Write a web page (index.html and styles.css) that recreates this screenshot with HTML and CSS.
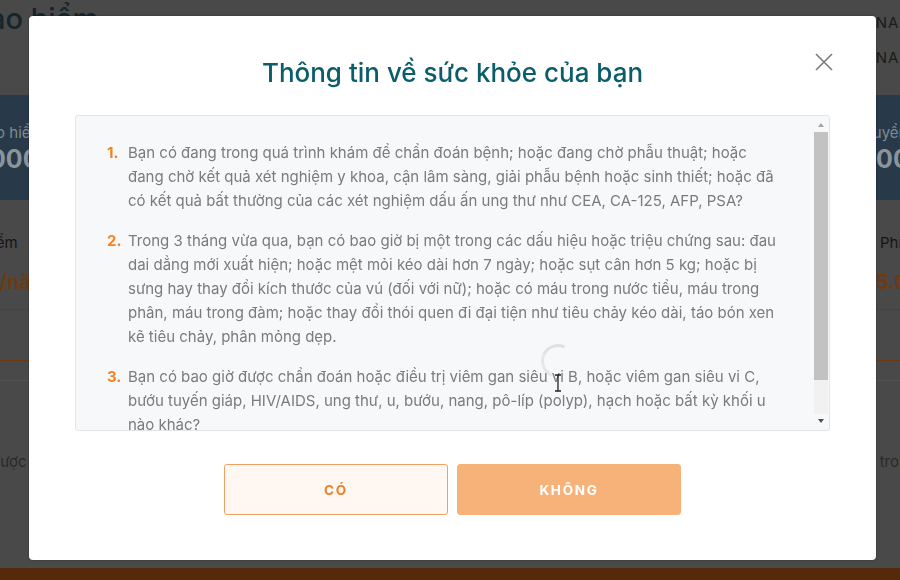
FILE: index.html
```html
<!DOCTYPE html>
<html lang="vi">
<head>
    <meta charset="UTF-8">
    <title>Thông tin sức khỏe</title>
    <link rel="stylesheet" href="styles.css">
</head>
<body>
<div class="page">
    <div class="page_head">
        <div class="brand">Bảo hiểm</div>
        <div class="user">
            <span>NAM</span>
            <span>NAM</span>
        </div>
    </div>
    <div class="band">
        <div class="band_col left">
            <span class="band_label">Phí bảo hiểm</span>
            <span class="band_num">000</span>
        </div>
        <div class="band_col right">
            <span class="band_label">Chuyển</span>
            <span class="band_num">5.000</span>
        </div>
    </div>
    <div class="sum_row">
        <div class="sum_col left">
            <span class="sum_label">Phí bảo hiểm</span>
            <span class="sum_val">đ/năm</span>
        </div>
        <div class="sum_col right">
            <span class="sum_label">Phí</span>
            <span class="sum_val">5.000</span>
        </div>
    </div>
    <div class="rule"></div>
    <div class="rule second"></div>
    <div class="note_row">
        <span class="note left">được lựa</span>
        <span class="note right">trong</span>
    </div>
    <div class="foot_bar"></div>
</div>

<div class="mask">
    <div class="modal">
        <h2 class="modal_title">Thông tin về sức khỏe của bạn</h2>
        <span class="close">
            <svg width="20" height="20" viewBox="0 0 20 20"><path d="M2 2 L18 18 M18 2 L2 18" stroke="#7a7a7a" stroke-width="1.6" fill="none"/></svg>
        </span>
        <div class="question_box">
            <ol class="question_list">
                <li>
                    <span class="num">1.</span>
                    <p>Bạn có đang trong quá trình khám để chẩn đoán bệnh; hoặc đang chờ phẫu thuật; hoặc<br>đang chờ kết quả xét nghiệm y khoa, cận lâm sàng, giải phẫu bệnh hoặc sinh thiết; hoặc đã<br>có kết quả bất thường của các xét nghiệm dấu ấn ung thư như CEA, CA-125, AFP, PSA?</p>
                </li>
                <li>
                    <span class="num">2.</span>
                    <p>Trong 3 tháng vừa qua, bạn có bao giờ bị một trong các dấu hiệu hoặc triệu chứng sau: đau<br>dai dẳng mới xuất hiện; hoặc mệt mỏi kéo dài hơn 7 ngày; hoặc sụt cân hơn 5 kg; hoặc bị<br>sưng hay thay đổi kích thước của vú (đối với nữ); hoặc có máu trong nước tiểu, máu trong<br>phân, máu trong đàm; hoặc thay đổi thói quen đi đại tiện như tiêu chảy kéo dài, táo bón xen<br>kẽ tiêu chảy, phân mỏng dẹp.</p>
                </li>
                <li>
                    <span class="num">3.</span>
                    <p>Bạn có bao giờ được chẩn đoán hoặc điều trị viêm gan siêu vi B, hoặc viêm gan siêu vi C,<br>bướu tuyến giáp, HIV/AIDS, ung thư, u, bướu, nang, pô-líp (polyp), hạch hoặc bất kỳ khối u<br>nào khác?</p>
                </li>
            </ol>
            <div class="scroll_bar">
                <span class="arrow up"></span>
                <span class="thumb"></span>
                <span class="track"></span>
                <span class="arrow down"></span>
            </div>
            <span class="spinner"></span>
            <span class="cursor">
                <svg width="10" height="18" viewBox="0 0 10 18"><path d="M2 1 H8 M5 1 V17 M2 17 H8" stroke="#222" stroke-width="1.3" fill="none"/></svg>
            </span>
        </div>
        <div class="btn_row">
            <button class="btn yes">CÓ</button>
            <button class="btn no">KHÔNG</button>
        </div>
    </div>
</div>
</body>
</html>
```

FILE: styles.css
```css
* {
    margin: 0;
    padding: 0;
    box-sizing: border-box;
}
ol, ul, li {
    list-style: none;
}
html, body {
    width: 900px;
    height: 580px;
    overflow: hidden;
}
body {
    background: #494949;
    font-family: Inter, "Noto Sans", sans-serif;
}

/* trang phía sau (đã bị làm tối) */
.page {
    height: 580px;
    display: flex;
    flex-direction: column;
    overflow: hidden;
    white-space: nowrap;
}
.page_head {
    height: 95px;
    display: flex;
    justify-content: space-between;
}
.brand {
    margin-left: -30px;
    margin-top: 1px;
    font-size: 29px;
    font-weight: 500;
    color: #14252c;
}
.user {
    display: flex;
    flex-direction: column;
    gap: 16px;
    margin-right: -14px;
    padding-top: 13px;
    font-size: 15px;
    letter-spacing: 1px;
    color: #1a1a1a;
}
.band {
    height: 105px;
    background: #28394a;
    display: flex;
    justify-content: space-between;
}
.band_col {
    display: flex;
    flex-direction: column;
    padding-top: 28px;
    gap: 2px;
}
.band_col.left .band_label {
    margin-left: -48px;
}
.band_col.left .band_num {
    margin-left: -11px;
}
.band_col.right {
    width: 47px;
    flex-shrink: 0;
}
.band_label {
    font-size: 15px;
    color: #7f8b93;
}
.band_num {
    font-size: 25px;
    font-weight: 700;
    color: #8a949b;
}
.sum_row {
    height: 110px;
    display: flex;
    justify-content: space-between;
    border-bottom: 1px solid #6b3a12;
}
.sum_col {
    display: flex;
    flex-direction: column;
    padding-top: 33px;
    gap: 18px;
}
.sum_col.left .sum_label {
    margin-left: -74px;
}
.sum_col.left .sum_val {
    margin-left: -13px;
}
.sum_col.right {
    width: 20px;
    flex-shrink: 0;
}
.sum_col.right .sum_val {
    margin-left: -4px;
}
.sum_label {
    font-size: 15px;
    color: #151515;
}
.sum_val {
    font-size: 20px;
    font-weight: 700;
    color: #6e3a10;
}
.rule {
    height: 51px;
    border-bottom: 1px solid #6b3a12;
}
.rule.second {
    height: 20px;
    border-bottom: 1px solid #525252;
}
.note_row {
    display: flex;
    justify-content: space-between;
    padding-top: 71px;
    font-size: 15px;
    color: #2a2a2a;
}
.note.left {
    margin-left: -9px;
}
.note.right {
    margin-right: -17px;
}
.foot_bar {
    margin-top: auto;
    height: 12px;
    background: #56290b;
}

/* hộp thoại */
.mask {
    position: fixed;
    left: 0;
    top: 0;
    width: 900px;
    height: 580px;
}
.modal {
    position: absolute;
    left: 29px;
    top: 16px;
    width: 847px;
    height: 544px;
    background: #fff;
    border-radius: 4px;
    padding: 39px 46px 0 46px;
    box-shadow: 0 0 2px rgba(0,0,0,0.4);
}
.modal_title {
    text-align: center;
    font-size: 26px;
    font-weight: 500;
    line-height: 36px;
    color: #0b5e69;
}
.close {
    position: absolute;
    right: 42px;
    top: 36px;
    width: 20px;
    height: 20px;
    display: flex;
}
.question_box {
    position: relative;
    margin-top: 24px;
    height: 316px;
    background: #f7f8f9;
    border: 1px solid #e3e4e6;
    border-radius: 3px;
    display: flex;
    overflow: hidden;
}
.question_list {
    flex: 1;
    padding: 25px 0 0 31px;
    display: flex;
    flex-direction: column;
    gap: 16px;
}
.question_list li {
    display: flex;
    font-size: 15px;
    line-height: 24px;
    color: #7b7b7b;
}
.question_list .num {
    width: 21px;
    flex-shrink: 0;
    font-weight: 700;
    color: #f58220;
}
.question_list p {
    white-space: nowrap;
}
.scroll_bar {
    width: 15px;
    margin: 2px 1px 2px 0;
    display: flex;
    flex-direction: column;
    align-items: center;
}
.arrow {
    width: 0;
    height: 0;
    border-left: 3px solid transparent;
    border-right: 3px solid transparent;
    margin: 5px 0;
}
.arrow.up {
    border-bottom: 4px solid #a3a3a3;
}
.arrow.down {
    border-top: 4px solid #505050;
}
.thumb {
    width: 14px;
    height: 248px;
    background: #c2c2c2;
}
.track {
    flex: 1;
    width: 14px;
    background: #f1f1f1;
}
.spinner {
    position: absolute;
    left: 465px;
    top: 228px;
    width: 34px;
    height: 34px;
    border-radius: 50%;
    border: 3px solid transparent;
    border-top-color: rgba(200,200,200,0.5);
    border-left-color: rgba(200,200,200,0.35);
    transform: rotate(-20deg);
}
.cursor {
    position: absolute;
    left: 477px;
    top: 258px;
    display: flex;
}
.btn_row {
    display: flex;
    justify-content: center;
    gap: 9px;
    margin-top: 33px;
}
.btn {
    width: 224px;
    height: 51px;
    border-radius: 3px;
    font-family: Inter, "Noto Sans", sans-serif;
    font-size: 13.5px;
    font-weight: 700;
    letter-spacing: 1.7px;
    cursor: pointer;
}
.btn.yes {
    background: #fff7f1;
    border: 1px solid #f1a062;
    color: #ef7f22;
}
.btn.no {
    background: #f7b279;
    border: 1px solid #f7b279;
    color: #fff;
}
```
